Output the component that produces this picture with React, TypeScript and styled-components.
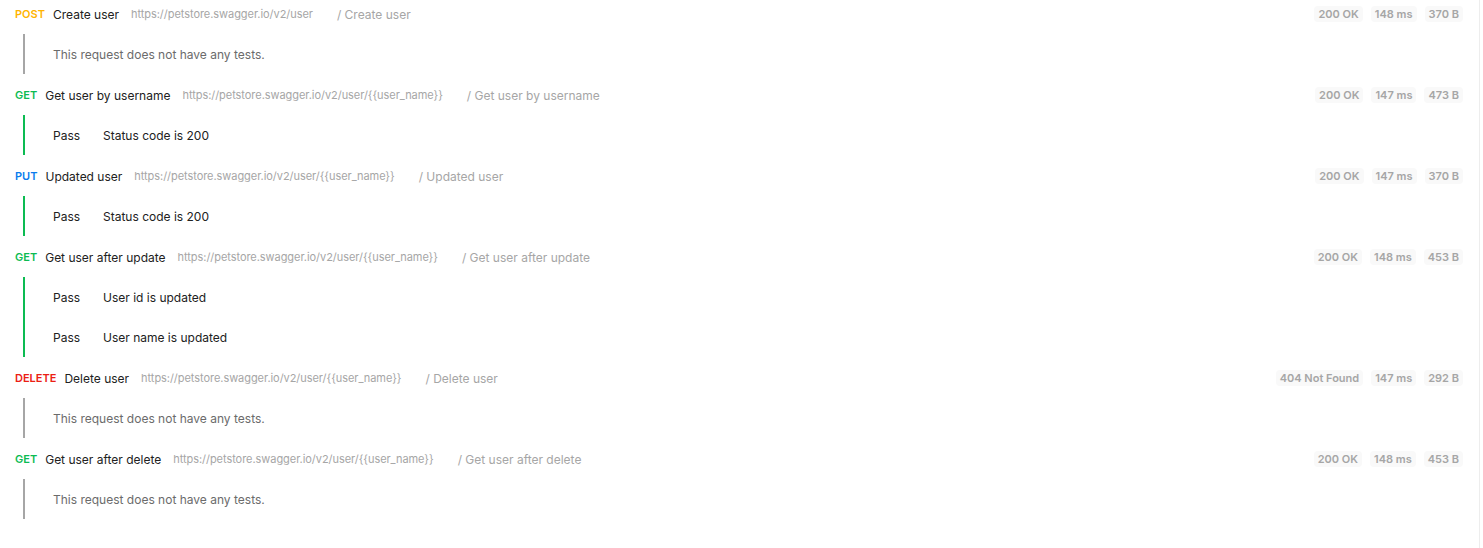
import React from "react";
import styled, { createGlobalStyle } from "styled-components";

const GlobalStyle = createGlobalStyle`
  html, body { margin: 0; padding: 0; background: #ffffff; }
  body { font-family: Inter, "Noto Sans", sans-serif; -webkit-font-smoothing: antialiased; }
`;

type Method = "GET" | "POST" | "PUT" | "DELETE";

const methodColors: Record<Method, string> = {
  GET: "#0cbb52",
  POST: "#ffb400",
  PUT: "#097bed",
  DELETE: "#eb2013",
};

interface TestResult {
  status: string;
  name: string;
}

interface RequestRun {
  method: Method;
  name: string;
  url: string;
  path: string;
  code: string;
  time: string;
  size: string;
  tests: TestResult[];
}

const runs: RequestRun[] = [
  {
    method: "POST",
    name: "Create user",
    url: "https://petstore.swagger.io/v2/user",
    path: "/ Create user",
    code: "200 OK",
    time: "148 ms",
    size: "370 B",
    tests: [],
  },
  {
    method: "GET",
    name: "Get user by username",
    url: "https://petstore.swagger.io/v2/user/{{user_name}}",
    path: "/ Get user by username",
    code: "200 OK",
    time: "147 ms",
    size: "473 B",
    tests: [{ status: "Pass", name: "Status code is 200" }],
  },
  {
    method: "PUT",
    name: "Updated user",
    url: "https://petstore.swagger.io/v2/user/{{user_name}}",
    path: "/ Updated user",
    code: "200 OK",
    time: "147 ms",
    size: "370 B",
    tests: [{ status: "Pass", name: "Status code is 200" }],
  },
  {
    method: "GET",
    name: "Get user after update",
    url: "https://petstore.swagger.io/v2/user/{{user_name}}",
    path: "/ Get user after update",
    code: "200 OK",
    time: "148 ms",
    size: "453 B",
    tests: [
      { status: "Pass", name: "User id is updated" },
      { status: "Pass", name: "User name is updated" },
    ],
  },
  {
    method: "DELETE",
    name: "Delete user",
    url: "https://petstore.swagger.io/v2/user/{{user_name}}",
    path: "/ Delete user",
    code: "404 Not Found",
    time: "147 ms",
    size: "292 B",
    tests: [],
  },
  {
    method: "GET",
    name: "Get user after delete",
    url: "https://petstore.swagger.io/v2/user/{{user_name}}",
    path: "/ Get user after delete",
    code: "200 OK",
    time: "148 ms",
    size: "453 B",
    tests: [],
  },
];

const Page = styled.div`
  width: 1480px;
  min-height: 548px;
  box-sizing: border-box;
  border-right: 1px solid #ededed;
  display: flex;
  flex-direction: column;
`;

const Group = styled.section`
  display: flex;
  flex-direction: column;
  padding-bottom: 7px;
`;

const Header = styled.div`
  height: 28px;
  display: flex;
  align-items: center;
  padding: 0 16px 0 15px;
  white-space: nowrap;
`;

const MethodLabel = styled.span<{ $color: string }>`
  font-size: 11px;
  font-weight: 600;
  color: ${(p) => p.$color};
  margin-right: 8px;
`;

const RequestName = styled.span`
  font-size: 12px;
  color: #212121;
  margin-right: 12px;
`;

const Url = styled.span`
  font-size: 11px;
  color: #a6a6a6;
  letter-spacing: -0.05px;
  margin-right: 24px;
`;

const Path = styled.span`
  font-size: 12px;
  color: #a6a6a6;
`;

const Stats = styled.div`
  margin-left: auto;
  display: flex;
  gap: 8px;
`;

const Chip = styled.span`
  height: 16px;
  display: inline-flex;
  align-items: center;
  padding: 0 4px;
  border-radius: 4px;
  background: #f9f9f9;
  color: #a6a6a6;
  font-size: 11px;
  font-weight: 600;
`;

const Tests = styled.div<{ $pass: boolean }>`
  margin: 6px 0 0 23px;
  border-left: 2px solid ${(p) => (p.$pass ? "#0cbb52" : "#a6a6a6")};
  display: flex;
  flex-direction: column;
`;

const TestRow = styled.div`
  height: 40px;
  display: flex;
  align-items: center;
  padding-left: 28px;
  font-size: 12px;
`;

const Status = styled.span`
  width: 50px;
  color: #212121;
`;

const TestName = styled.span`
  color: #212121;
`;

const Empty = styled.span`
  color: #6b6b6b;
`;

export default function App() {
  return (
    <>
      <GlobalStyle />
      <Page>
        {runs.map((r, i) => (
          <Group key={i}>
            <Header>
              <MethodLabel $color={methodColors[r.method]}>{r.method}</MethodLabel>
              <RequestName>{r.name}</RequestName>
              <Url>{r.url}</Url>
              <Path>{r.path}</Path>
              <Stats>
                <Chip>{r.code}</Chip>
                <Chip>{r.time}</Chip>
                <Chip>{r.size}</Chip>
              </Stats>
            </Header>
            <Tests $pass={r.tests.length > 0}>
              {r.tests.length === 0 ? (
                <TestRow>
                  <Empty>This request does not have any tests.</Empty>
                </TestRow>
              ) : (
                r.tests.map((t, j) => (
                  <TestRow key={j}>
                    <Status>{t.status}</Status>
                    <TestName>{t.name}</TestName>
                  </TestRow>
                ))
              )}
            </Tests>
          </Group>
        ))}
      </Page>
    </>
  );
}
